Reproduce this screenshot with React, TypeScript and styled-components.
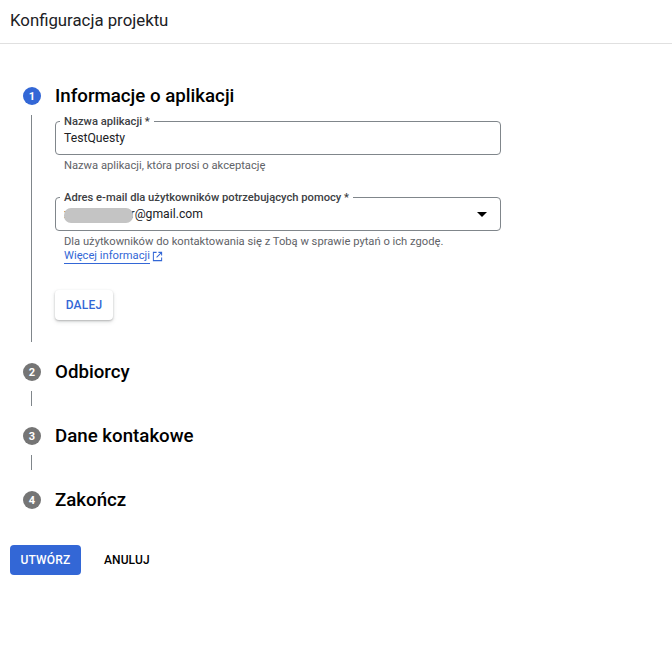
import React from "react";
import styled, { createGlobalStyle } from "styled-components";

const Global = createGlobalStyle`
  html, body { margin: 0; padding: 0; background: #fff; }
  body { font-family: Roboto, "Liberation Sans", sans-serif; color: #000; }
`;

const Page = styled.div`
  width: 672px;
  height: 652px;
  overflow: hidden;
  background: #fff;
`;

const Header = styled.header`
  height: 44px;
  border-bottom: 1px solid #e0e0e0;
  display: flex;
  align-items: center;
  padding: 0 0 3px 10px;
  box-sizing: border-box;
  font-size: 16.8px;
  color: #202124;
`;

const Stepper = styled.div`
  padding: 43px 0 0 23px;
`;

const StepHead = styled.div`
  display: flex;
  align-items: center;
  gap: 14px;
  height: 18px;
`;

const Circle = styled.span<{ $active?: boolean }>`
  width: 18px;
  height: 18px;
  border-radius: 50%;
  background: ${(p) => (p.$active ? "#3367d6" : "#757575")};
  color: #fff;
  font-size: 11px;
  font-weight: 700;
  display: flex;
  align-items: center;
  justify-content: center;
  flex: none;
`;

const StepTitle = styled.h2`
  margin: 0;
  font-size: 18.7px;
  font-weight: 500;
  line-height: 24px;
  color: #000;
`;

const StepBody = styled.div`
  display: flex;
  margin-top: 10px;
  padding-left: 8px;
`;

const Rail = styled.div`
  width: 1px;
  background: #80868b;
  flex: none;
`;

const Connector = styled.div`
  width: 1px;
  height: 15px;
  background: #80868b;
  margin: 10px 0 21px 8px;
`;

const StepContent = styled.div`
  margin-left: 23px;
  width: 446px;
  height: 227px;
`;

const Field = styled.fieldset`
  position: relative;
  margin: 0;
  padding: 0 8px 0 4px;
  height: 40px;
  box-sizing: border-box;
  border: 1px solid #80868b;
  border-radius: 4px;
  min-width: 0;
`;

const Legend = styled.legend`
  position: relative;
  top: 1px;
  padding: 0 4px;
  font-size: 11.2px;
  line-height: 12px;
  font-weight: 500;
  color: #3c4043;
`;

const Value = styled.div`
  font-size: 12.2px;
  line-height: 18px;
  color: #202124;
  padding-left: 4px;
  margin-top: 2px;
`;

const Hint = styled.div`
  font-size: 11.2px;
  line-height: 16px;
  color: #5f6368;
  margin: 3px 0 0 9px;
`;

const LinkRow = styled(Hint)`
  margin-top: -2px;
`;

const SelectField = styled(Field)`
  margin-top: 17px;
`;

const Caret = styled.span`
  position: absolute;
  right: 13px;
  top: 9px;
  width: 0;
  height: 0;
  border-left: 5px solid transparent;
  border-right: 5px solid transparent;
  border-top: 5px solid #000;
`;

const Redaction = styled.span`
  position: absolute;
  left: 8px;
  top: 5px;
  width: 69px;
  height: 15px;
  border-radius: 7px;
  background: #c4c4c4;
`;

const MoreLink = styled.a`
  display: inline-flex;
  align-items: center;
  gap: 2px;
  color: #3367d6;
  text-decoration: none;
`;

const LinkText = styled.span`
  border-bottom: 1px solid #3367d6;
  line-height: 14px;
`;

const NextButton = styled.button`
  display: block;
  margin-top: 26px;
  width: 58px;
  height: 30px;
  border: none;
  border-radius: 4px;
  background: #fff;
  box-shadow: 0 1px 2px rgba(60, 64, 67, 0.3), 0 2px 4px rgba(60, 64, 67, 0.15);
  color: #3367d6;
  font: 500 12px Roboto, sans-serif;
  letter-spacing: 0.2px;
`;

const StepGap = styled.div`
  height: 21px;
`;

const Actions = styled.div`
  display: flex;
  align-items: center;
  margin: 36px 0 0 10px;
  gap: 23px;
`;

const PrimaryButton = styled.button`
  width: 71px;
  height: 30px;
  border: none;
  border-radius: 4px;
  background: #3367d6;
  color: #fff;
  font: 500 12px Roboto, sans-serif;
  letter-spacing: 0.2px;
`;

const TextButton = styled.button`
  border: none;
  background: transparent;
  padding: 0;
  color: #000;
  font: 500 12px Roboto, sans-serif;
  letter-spacing: 0.1px;
`;

const External = () => (
  <svg width="11" height="11" viewBox="0 0 24 24" fill="none" stroke="#3367d6" strokeWidth="2.2">
    <path d="M10 3H3v18h18v-7" />
    <path d="M14 3h7v7M21 3 10 14" />
  </svg>
);

export default function App() {
  return (
    <Page>
      <Global />
      <Header>Konfiguracja projektu</Header>
      <Stepper>
        <StepHead>
          <Circle $active>1</Circle>
          <StepTitle>Informacje o aplikacji</StepTitle>
        </StepHead>
        <StepBody>
          <Rail />
          <StepContent>
            <Field>
              <Legend>Nazwa aplikacji *</Legend>
              <Value>TestQuesty</Value>
            </Field>
            <Hint>Nazwa aplikacji, która prosi o akceptację</Hint>
            <SelectField>
              <Legend>Adres e-mail dla użytkowników potrzebujących pomocy *</Legend>
              <Value>xxxxxxxxxxxr@gmail.com</Value>
              <Redaction />
              <Caret />
            </SelectField>
            <Hint>Dla użytkowników do kontaktowania się z Tobą w sprawie pytań o ich zgodę.</Hint>
            <LinkRow>
              <MoreLink href="#">
                <LinkText>Więcej informacji</LinkText>
                <External />
              </MoreLink>
            </LinkRow>
            <NextButton>DALEJ</NextButton>
          </StepContent>
        </StepBody>
        <StepGap />
        <StepHead>
          <Circle>2</Circle>
          <StepTitle>Odbiorcy</StepTitle>
        </StepHead>
        <Connector />
        <StepHead>
          <Circle>3</Circle>
          <StepTitle>Dane kontakowe</StepTitle>
        </StepHead>
        <Connector />
        <StepHead>
          <Circle>4</Circle>
          <StepTitle>Zakończ</StepTitle>
        </StepHead>
      </Stepper>
      <Actions>
        <PrimaryButton>UTWÓRZ</PrimaryButton>
        <TextButton>ANULUJ</TextButton>
      </Actions>
    </Page>
  );
}
